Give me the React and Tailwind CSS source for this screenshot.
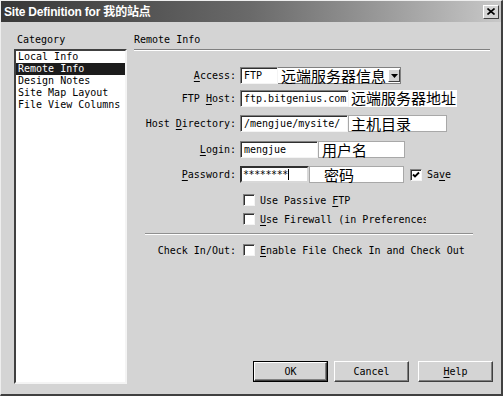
import React from 'react';

const mono = { fontFamily: '"DejaVu Sans Mono", "Liberation Mono", monospace' };
const cjk = { fontFamily: '"Noto Sans CJK SC", sans-serif' };

const sunken = "bg-white border border-t-[#808080] border-l-[#808080] border-r-[#f4f4f4] border-b-[#f4f4f4] shadow-[inset_1px_1px_0_#303030]";

const U = ({ children }) => <span className="underline underline-offset-[2px]">{children}</span>;

const Check = ({ checked }) => (
    <div className={`w-[12px] h-[12px] shrink-0 flex items-center justify-center ${sunken}`}>
        {checked && (
            <svg width="8" height="8" viewBox="0 0 8 8">
                <path d="M1 3.5 L3 5.5 L7 1.5" stroke="#000" strokeWidth="1.8" fill="none" />
            </svg>
        )}
    </div>
);

const Label = ({ children }) => (
    <div className="w-[103px] shrink-0 text-right pr-[1px] leading-[17px]">{children}</div>
);

const Button = ({ children, isDefault }) => (
    <div className={`w-[75px] h-[21px] ${isDefault ? "border border-black" : ""}`}>
        <div className="w-full h-full bg-[#d4d4d4] border border-t-white border-l-white border-r-[#404040] border-b-[#404040] shadow-[inset_-1px_-1px_0_#808080] flex items-center justify-center">
            {children}
        </div>
    </div>
);

const categories = ["Local Info", "Remote Info", "Design Notes", "Site Map Layout", "File View Columns"];

export default function App() {
    return (
        <div className="w-[503px] h-[396px] bg-[#d4d4d4] flex flex-col border-l border-t border-l-[#eeeeee] border-t-[#eeeeee] border-r-2 border-b-2 border-r-[#404040] border-b-[#404040] text-[10px] text-black overflow-hidden" style={mono}>
            {/* title bar */}
            <div className="h-[21px] shrink-0 bg-gradient-to-r from-[#383838] via-[#6a6a6a] to-[#c8c8c8] flex items-center justify-between pl-[3px] pr-[2px]">
                <div className="text-white font-bold text-[12px] tracking-[-0.2px]" style={{ fontFamily: '"Liberation Sans", "Noto Sans CJK SC", sans-serif' }}>
                    Site Definition for 我的站点
                </div>
                <div className="w-[16px] h-[14px] bg-[#d4d4d4] border border-t-white border-l-white border-r-[#404040] border-b-[#404040] flex items-center justify-center">
                    <svg width="8" height="7" viewBox="0 0 8 7">
                        <path d="M0.5 0.5 L7.5 6.5 M7.5 0.5 L0.5 6.5" stroke="#000" strokeWidth="1.6" />
                    </svg>
                </div>
            </div>

            <div className="flex flex-1">
                {/* category column */}
                <div className="ml-[13px] mt-[12px] w-[113px] flex flex-col">
                    <div className="h-[15px] pl-[3px] leading-[12px]">Category</div>
                    <div className="h-[335px] bg-white border-2 border-t-[#404040] border-l-[#404040] border-r-[#f4f4f4] border-b-[#f4f4f4] pt-0">
                        {categories.map((c) => (
                            <div key={c} className={`h-[12px] leading-[12px] pl-[2px] ${c === "Remote Info" ? "bg-[#1c1c1c] text-white" : ""}`}>
                                {c}
                            </div>
                        ))}
                    </div>
                </div>

                {/* right panel */}
                <div className="ml-[7px] mt-[12px] flex-1 flex flex-col pr-[8px]">
                    <div className="h-[15px] leading-[12px]">Remote Info</div>
                    <div className="h-[2px] w-[356px] border-t border-t-[#808080] border-b border-b-white" />

                    <div className="flex mt-[16px] h-[17px]">
                        <Label><U>A</U>ccess:</Label>
                        <div className="ml-[3px] flex items-center h-[17px] border border-[#808080] bg-white w-[161px]">
                            <div className={`w-[38px] h-[17px] -ml-px leading-[15px] pl-[3px] ${sunken}`}>FTP</div>
                            <div className="w-[110px] h-[15px] leading-[15px] text-[15px] pl-[3px] whitespace-nowrap" style={cjk}>远端服务器信息</div>
                            <div className="w-[12px] h-[13px] bg-[#d4d4d4] border border-t-white border-l-white border-r-[#404040] border-b-[#404040] flex items-center justify-center">
                                <svg width="7" height="4" viewBox="0 0 7 4"><path d="M0 0 H7 L3.5 4 Z" fill="#000" /></svg>
                            </div>
                        </div>
                    </div>

                    <div className="flex mt-[6px] h-[17px]">
                        <Label>FTP <U>H</U>ost:</Label>
                        <div className={`ml-[3px] w-[109px] h-[17px] leading-[15px] pl-[3px] ${sunken}`}>ftp.bitgenius.com</div>
                        <div className="bg-white h-[17px] leading-[16px] text-[15px] pl-[2px] pr-[1px] whitespace-nowrap" style={cjk}>远端服务器地址</div>
                    </div>

                    <div className="flex mt-[8px] h-[17px]">
                        <Label>Host <U>D</U>irectory:</Label>
                        <div className={`ml-[3px] w-[108px] h-[17px] leading-[15px] pl-[3px] ${sunken}`}>/mengjue/mysite/</div>
                        <div className="bg-white w-[99px] h-[17px] border border-[#a8a8a8] leading-[15px] text-[15px] pl-[2px] whitespace-nowrap" style={cjk}>主机目录</div>
                    </div>

                    <div className="flex mt-[9px] h-[17px]">
                        <Label><U>L</U>ogin:</Label>
                        <div className={`ml-[3px] w-[78px] h-[17px] leading-[15px] pl-[3px] ${sunken}`}>mengjue</div>
                        <div className="bg-white w-[87px] h-[17px] border border-[#a8a8a8] leading-[15px] text-[15px] pl-[3px] whitespace-nowrap" style={cjk}>用户名</div>
                    </div>

                    <div className="flex mt-[8px] h-[17px] items-center">
                        <Label><U>P</U>assword:</Label>
                        <div className="ml-[3px] w-[69px] h-[17px] leading-[15px] pl-[1px] bg-white border-2 border-t-[#303030] border-l-[#303030] border-r-[#d8d8d8] border-b-[#d8d8d8] flex items-center">
                            <span className="tracking-[-0.4px]">********</span>
                            <span className="w-px h-[11px] bg-black" />
                        </div>
                        <div className="bg-white w-[95px] h-[17px] border border-[#a8a8a8] leading-[15px] text-[15px] pl-[14px] whitespace-nowrap" style={cjk}>密码</div>
                        <div className="ml-[6px] flex items-center gap-[5px]">
                            <Check checked />
                            <span>Sa<U>v</U>e</span>
                        </div>
                    </div>

                    <div className="flex items-center mt-[11px] ml-[109px] gap-[5px] h-[12px]">
                        <Check />
                        <span>Use Passive <U>F</U>TP</span>
                    </div>

                    <div className="flex items-center mt-[7px] ml-[109px] gap-[5px] h-[12px]">
                        <Check />
                        <span className="w-[166px] overflow-hidden whitespace-nowrap"><U>U</U>se Firewall (in Preferences)</span>
                    </div>

                    <div className="mt-[8px] ml-[11px] h-[2px] w-[328px] border-t border-t-[#909090] border-b border-b-white" />

                    <div className="flex mt-[9px] h-[12px] items-center">
                        <div className="w-[103px] shrink-0 text-right pr-[1px]">Check In/Out:</div>
                        <div className="ml-[6px] flex items-center gap-[5px]">
                            <Check />
                            <span><U>E</U>nable File Check In and Check Out</span>
                        </div>
                    </div>

                    <div className="mt-auto mb-[12px] flex justify-end">
                        <Button isDefault>OK</Button>
                        <div className="ml-[6px]"><Button>Cancel</Button></div>
                        <div className="ml-[9px]"><Button><span><U>H</U>elp</span></Button></div>
                    </div>
                </div>
            </div>
        </div>
    );
}
